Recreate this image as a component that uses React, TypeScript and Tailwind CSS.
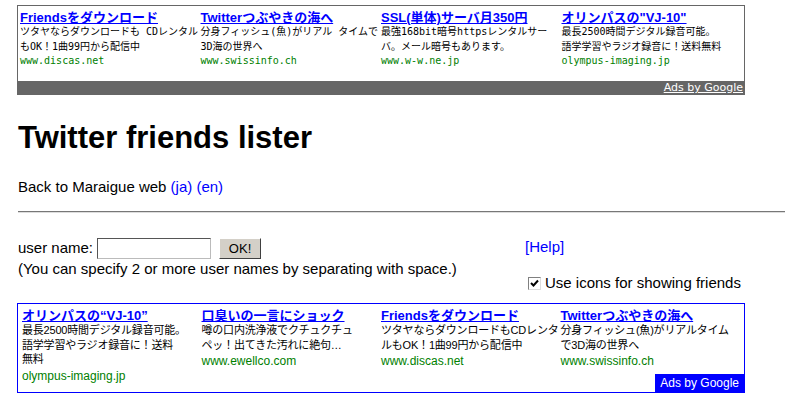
import React from "react";

const topAds = [
  {
    title: "Friendsをダウンロード",
    lines: ["ツタヤならダウンロードも CDレンタル", "もOK！1曲99円から配信中"],
    url: "www.discas.net",
  },
  {
    title: "Twitterつぶやきの海へ",
    lines: ["分身フィッシュ(魚)がリアル タイムで", "3D海の世界へ"],
    url: "www.swissinfo.ch",
  },
  {
    title: "SSL(単体)サーバ月350円",
    lines: ["最強168bit暗号httpsレンタルサー", "バ。メール暗号もあります。"],
    url: "www.w-w.ne.jp",
  },
  {
    title: "オリンパスの\"VJ-10\"",
    lines: ["最長2500時間デジタル録音可能。", "語学学習やラジオ録音に！送料無料"],
    url: "olympus-imaging.jp",
  },
];

const bottomAds = [
  {
    title: "オリンパスの“VJ-10”",
    lines: ["最長2500時間デジタル録音可能。", "語学学習やラジオ録音に！送料", "無料"],
    url: "olympus-imaging.jp",
  },
  {
    title: "口臭いの一言にショック",
    lines: ["噂の口内洗浄液でクチュクチュ", "ペッ！出てきた汚れに絶句…"],
    url: "www.ewellco.com",
  },
  {
    title: "Friendsをダウンロード",
    lines: ["ツタヤならダウンロードもCDレンタ", "ルもOK！1曲99円から配信中"],
    url: "www.discas.net",
  },
  {
    title: "Twitterつぶやきの海へ",
    lines: ["分身フィッシュ(魚)がリアルタイム", "で3D海の世界へ"],
    url: "www.swissinfo.ch",
  },
];

const TopAdBox: React.FC = () => (
  <div className="w-[728px] h-[90px] border border-[#666] bg-white flex flex-col">
    <div className="grid grid-cols-4 px-[2px] pt-[4px]">
      {topAds.map((ad) => (
        <div key={ad.url} className="min-w-0">
          <a className="block whitespace-nowrap text-[13px] leading-[15px] font-bold text-[#00f] underline font-['Liberation_Sans','Noto_Sans_CJK_JP',sans-serif]">
            {ad.title}
          </a>
          {ad.lines.map((line) => (
            <div
              key={line}
              className="whitespace-nowrap text-[10px] leading-[14.5px] text-black font-['DejaVu_Sans_Mono','Noto_Sans_CJK_JP',monospace]"
            >
              {line}
            </div>
          ))}
          <div className="whitespace-nowrap text-[10px] leading-[14px] text-[#008000] font-['DejaVu_Sans_Mono',monospace]">
            {ad.url}
          </div>
        </div>
      ))}
    </div>
    <div className="mt-auto h-[13px] bg-[#666] flex justify-end items-center pr-[1px]">
      <a className="text-[11px] leading-[13px] text-white underline font-['DejaVu_Sans',sans-serif]">
        Ads by Google
      </a>
    </div>
  </div>
);

const BottomAdBox: React.FC = () => (
  <div className="relative w-[728px] h-[90px] border border-[#00f] bg-white">
    <div className="grid grid-cols-4 px-[4px] pt-[4px]">
      {bottomAds.map((ad) => (
        <div key={ad.url} className="min-w-0">
          <a className="block whitespace-nowrap text-[13px] leading-[15px] font-bold text-[#00f] underline font-['Liberation_Sans','Noto_Sans_CJK_JP',sans-serif]">
            {ad.title}
          </a>
          {ad.lines.map((line) => (
            <div
              key={line}
              className="whitespace-nowrap text-[11px] leading-[14.5px] text-black font-['Liberation_Sans','Noto_Sans_CJK_JP',sans-serif] tracking-[-0.2px]"
            >
              {line}
            </div>
          ))}
          <div className="mt-[1px] whitespace-nowrap text-[12px] leading-[16px] text-[#008000] font-['Liberation_Sans',sans-serif]">
            {ad.url}
          </div>
        </div>
      ))}
    </div>
    <div className="absolute right-0 bottom-0 h-[18px] px-[5px] bg-[#00f] text-white text-[12px] leading-[18px] font-['Liberation_Sans',sans-serif]">
      Ads by Google
    </div>
  </div>
);

export default function App() {
  return (
    <div className="w-[800px] h-[400px] overflow-hidden bg-white text-black font-['Liberation_Sans','Noto_Sans_CJK_JP',sans-serif]">
      <div className="pt-[5px] pl-[17px]">
        <TopAdBox />
      </div>

      <div className="pl-[18px] pr-[15px]">
        <h1 className="mt-[25px] text-[31px] leading-[36px] font-bold">Twitter friends lister</h1>

        <p className="mt-[22px] text-[15px] leading-[18px]">
          Back to Maraigue web <a className="text-[#00f]">(ja)</a> <a className="text-[#00f]">(en)</a>
        </p>

        <hr className="mt-[15px] border-0 border-t border-t-[#777] border-b border-b-[#ddd]" />

        <div className="mt-[24px] flex text-[15px]">
          <div className="w-[507px]">
            <div className="flex items-center h-[22px]">
              <span className="leading-[18px]">user name:</span>
              <input
                type="text"
                className="ml-[4px] w-[114px] h-[21px] bg-white border border-t-[#555] border-l-[#555] border-b-[#bbb] border-r-[#bbb] outline-none px-[2px] text-[13px]"
              />
              <button className="ml-[8px] w-[42px] h-[21px] bg-[#d4d0c8] border border-t-white border-l-white border-b-[#404040] border-r-[#404040] text-[13px] leading-[19px] text-black">
                OK!
              </button>
            </div>
            <p className="leading-[18px] mt-[1px]">
              (You can specify 2 or more user names by separating with space.)
            </p>
          </div>
          <div className="flex flex-col">
            <a className="text-[#00f] leading-[18px] mt-[1px]">[Help]</a>
            <label className="mt-[18px] ml-[3px] flex items-center gap-[4px] leading-[18px]">
              <span className="w-[13px] h-[13px] border border-t-[#808080] border-l-[#808080] border-b-[#ddd] border-r-[#ddd] bg-white flex items-center justify-center">
                <svg width="9" height="9" viewBox="0 0 9 9">
                  <path d="M1 4 L3.5 6.5 L8 1.5" stroke="#000" strokeWidth="2" fill="none" />
                </svg>
              </span>
              Use icons for showing friends
            </label>
          </div>
        </div>
      </div>

      <div className="mt-[11px] pl-[17px]">
        <BottomAdBox />
      </div>
    </div>
  );
}
